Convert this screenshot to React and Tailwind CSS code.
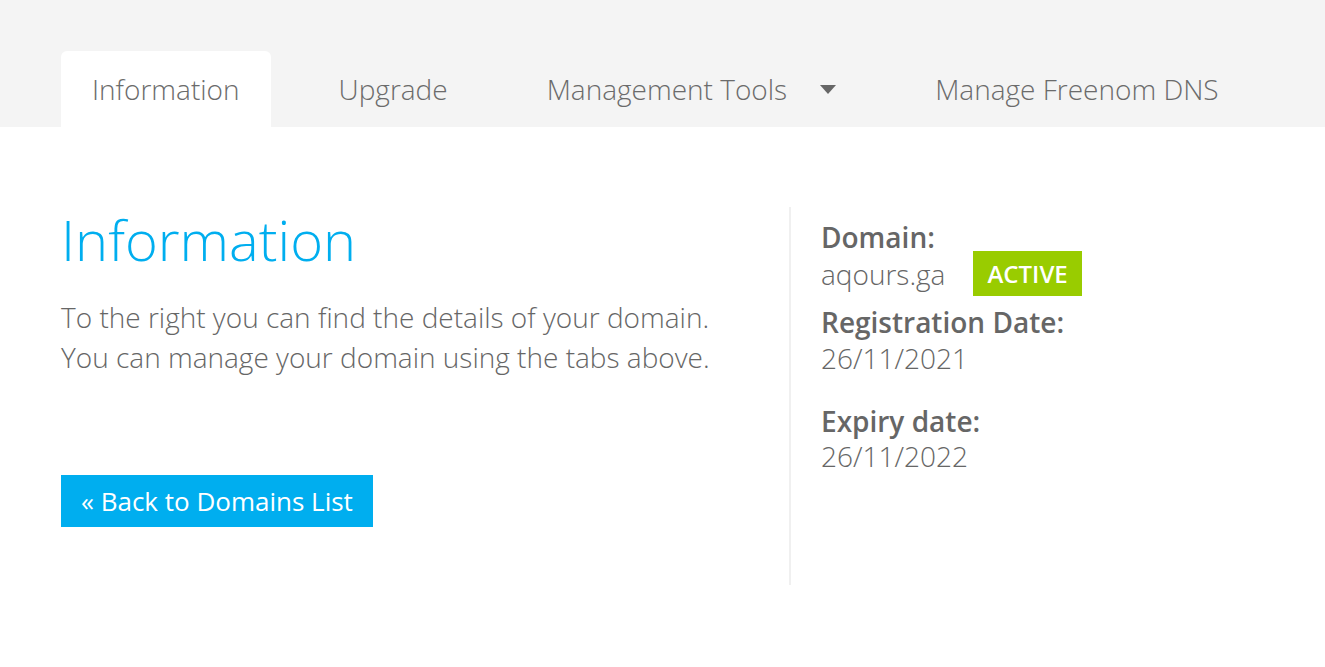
import React from "react";

const Tab = ({ label, active, caret }) => (
  <div
    className={
      "flex items-center h-[76px] px-[31px] rounded-t-[6px] " +
      (active ? "bg-white" : "")
    }
  >
    <span className="text-[28px] font-light text-[#6b6b6b]">{label}</span>
    {caret && (
      <svg className="ml-[33px] mt-[1px]" width="16" height="9" viewBox="0 0 16 9">
        <path d="M0 0 L16 0 L8 9 Z" fill="#666" />
      </svg>
    )}
  </div>
);

const App = () => {
  return (
    <div className="min-h-[667px] bg-white font-['Open_Sans',sans-serif] text-[#666]">
      {/* tabs */}
      <div className="bg-[#f4f4f4] h-[127px] flex items-end px-[61px] gap-[37px]">
        <Tab label="Information" active />
        <Tab label="Upgrade" />
        <Tab label="Management Tools" caret />
        <Tab label="Manage Freenom DNS" />
      </div>

      {/* body */}
      <div className="flex px-[61px] pt-[80px]">
        <div className="w-[728px] shrink-0">
          <h1 className="text-[56px] font-light text-[#00aeef] leading-[64px]">
            Information
          </h1>
          <p className="text-[28px] font-light leading-[40px] mt-[26px]">
            To the right you can find the details of your domain.
            <br />
            You can manage your domain using the tabs above.
          </p>
          <button className="mt-[98px] bg-[#00aeef] text-white text-[26px] h-[52px] px-[20px]">
            « Back to Domains List
          </button>
        </div>

        <div className="border-l-2 border-[#f0f0f0] pl-[30px] h-[378px] pt-[16px]">
          <div className="text-[28px] font-semibold leading-[28px]">Domain:</div>
          <div className="flex items-center h-[45px]">
            <span className="text-[28px] font-light leading-[40px]">aqours.ga</span>
            <span className="ml-[28px] bg-[#99cc00] text-white text-[24px] font-semibold h-[45px] px-[14px] flex items-center">
              ACTIVE
            </span>
          </div>
          <div className="text-[28px] font-semibold leading-[36px] mt-[8px]">Registration Date:</div>
          <div className="text-[28px] font-light leading-[36px]">26/11/2021</div>
          <div className="text-[28px] font-semibold leading-[36px] mt-[27px]">Expiry date:</div>
          <div className="text-[28px] font-light leading-[34px]">26/11/2022</div>
        </div>
      </div>
    </div>
  );
};

export default App;
